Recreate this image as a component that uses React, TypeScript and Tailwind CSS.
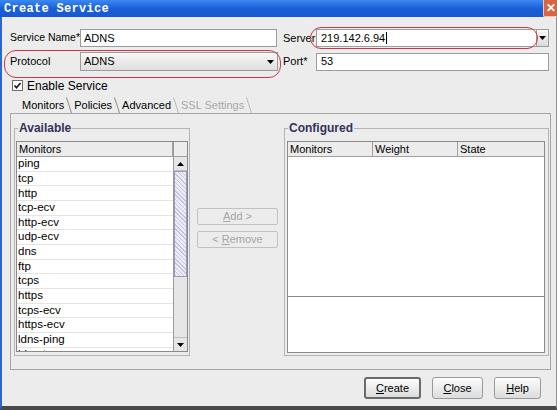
import React from 'react';

const available = [
  'ping', 'tcp', 'http', 'tcp-ecv', 'http-ecv', 'udp-ecv', 'dns', 'ftp',
  'tcps', 'https', 'tcps-ecv', 'https-ecv', 'ldns-ping', 'ldns-tcp',
];

function Arrow({ up = false }: { up?: boolean }) {
  return (
    <svg width="7" height="4" viewBox="0 0 7 4">
      <polygon points={up ? '0,4 7,4 3.5,0' : '0,0 7,0 3.5,4'} fill="#000" />
    </svg>
  );
}

function TabSlash({ light = false }: { light?: boolean }) {
  return (
    <svg width="6" height="16" viewBox="0 0 6 16" className="shrink-0">
      <line x1="0.5" y1="0.5" x2="5.5" y2="16" stroke={light ? '#b8b8b8' : '#8c8c8c'} strokeWidth="1" />
    </svg>
  );
}

function Legend({ text }: { text: string }) {
  return (
    <span className="absolute -top-[9px] left-[3px] bg-[#ececec] px-[1px] text-[12px] font-bold leading-[16px] text-[#33335a]">
      {text}
    </span>
  );
}

function DlgButton({ mn, rest, focused = false }: { mn: string; rest: string; focused?: boolean }) {
  return (
    <button
      className={
        'flex h-[22px] w-full items-center justify-center rounded-[3px] bg-gradient-to-b from-[#fdfdfd] to-[#dcdcdc] text-[11px] text-black ' +
        (focused ? 'border-2 border-[#6a6a6a]' : 'border border-[#9a9a9a]')
      }
    >
      <span className="underline">{mn}</span>
      {rest}
    </button>
  );
}

export default function App() {
  return (
    <div className="flex h-[410px] w-[557px] flex-col overflow-hidden bg-[#ececec] font-['Liberation_Sans',Arial,sans-serif] text-[11px] text-black">
      {/* title bar */}
      <div className="relative flex h-[17px] shrink-0 items-center bg-gradient-to-b from-[#3d88f0] via-[#1a5fd8] to-[#1858cf] pl-[4px]">
        <span className="font-['Liberation_Mono',monospace] text-[12px] font-bold tracking-[0.3px] text-white">
          Create Service
        </span>
        <span className="absolute right-0 top-0 flex h-[17px] w-[14px] items-center justify-center rounded-bl-[2px] border-l border-b border-[#f3c7b8] bg-[#d9653f] text-[12px] font-bold leading-none text-white">
          ✕
        </span>
      </div>

      {/* body */}
      <div className="relative flex-1 border-l-2 border-r border-b-[4px] border-l-[#2b66d6] border-r-[#8e8e8e] border-b-[#4a4a4a] pl-[8px] pt-[12px]">
        {/* row 1 */}
        <div className="flex h-[18px] items-center">
          <span className="w-[70px] whitespace-nowrap text-[10.5px]">Service Name*</span>
          <div className="flex h-[18px] w-[197px] items-center border border-[#9c9c9c] bg-white px-[3px]">ADNS</div>
          <span className="ml-[6px] w-[33px]">Server</span>
          <div className="flex h-[18px] w-[221px] items-center border border-[#9c9c9c] bg-white px-[4px]">
            219.142.6.94<span className="ml-[1px] h-[12px] w-px bg-black" />
          </div>
          <div className="flex h-[18px] w-[12px] items-center justify-center border border-l-0 border-[#9c9c9c] bg-gradient-to-b from-[#fafafa] to-[#dadada]">
            <Arrow />
          </div>
        </div>

        {/* row 2 */}
        <div className="mt-[5px] flex h-[19px] items-center">
          <span className="w-[70px]">Protocol</span>
          <div className="flex h-[19px] w-[198px] items-center justify-between border border-[#9c9c9c] bg-gradient-to-b from-[#f8f8f8] to-[#dedede] pl-[3px] pr-[3px]">
            <span>ADNS</span>
            <Arrow />
          </div>
          <span className="ml-[5px] w-[33px]">Port*</span>
          <div className="flex h-[18px] w-[233px] items-center border border-[#9c9c9c] bg-white px-[4px]">53</div>
        </div>

        {/* checkbox */}
        <div className="mt-[8px] flex h-[13px] items-center gap-[4px] pl-[2px]">
          <span className="flex h-[11px] w-[11px] items-center justify-center border border-[#6f6f6f] bg-white">
            <svg width="9" height="9" viewBox="0 0 9 9">
              <polyline points="1.5,4.5 3.5,6.8 7.5,2" fill="none" stroke="#1c1c1c" strokeWidth="1.7" />
            </svg>
          </span>
          <span className="text-[12px]">Enable Service</span>
        </div>

        {/* tabs */}
        <div className="mt-[5px] flex h-[16px] items-end pl-[10px] text-[11px]">
          <span className="px-[2px]">Monitors</span>
          <TabSlash />
          <span className="px-[2px]">Policies</span>
          <TabSlash />
          <span className="px-[2px]">Advanced</span>
          <TabSlash light />
          <span className="px-[2px] text-[#a8a8a8]">SSL Settings</span>
          <TabSlash light />
        </div>

        {/* tab panel */}
        <div className="flex h-[257px] w-[541px] border border-[#a6a6a6] pl-[3px] pt-[14px]">
          {/* available */}
          <div className="relative h-[228px] w-[176px] shrink-0 border border-[#b4b4b4] pl-[1px] pt-[12px]">
            <Legend text="Available" />
            <div className="flex h-[211px] w-[172px] border border-[#8a8a8a] bg-white">
              <div className="flex flex-1 flex-col overflow-hidden">
                <div className="flex h-[15px] shrink-0 items-center border-b border-r border-[#a0a0a0] bg-[#ececec] px-[2px]">Monitors</div>
                {available.map(m => (
                  <div key={m} className="flex h-[14.67px] shrink-0 items-center border-b border-[#e4e4e4] px-[1px] text-[11.5px]">
                    {m}
                  </div>
                ))}
              </div>
              <div className="flex w-[14px] shrink-0 flex-col border-l border-[#9a9a9a] bg-[#e6e6e6]">
                <div className="h-[15px] border-b border-[#a0a0a0] bg-[#ececec]" />
                <div className="flex h-[14px] items-center justify-center border-b border-[#c0c0c0]">
                  <Arrow up />
                </div>
                <div className="h-[106px] border border-[#9a9ac0] bg-[repeating-linear-gradient(45deg,#c4c4e0_0px,#c4c4e0_1px,#ececf6_1px,#ececf6_3px)]" />
                <div className="flex-1" />
                <div className="flex h-[14px] items-center justify-center border-t border-[#c0c0c0]">
                  <Arrow />
                </div>
              </div>
            </div>
          </div>

          {/* move buttons */}
          <div className="flex w-[94px] shrink-0 flex-col gap-[6px] pl-[7px] pt-[80px]">
            <div className="flex h-[17px] w-[81px] items-center justify-center rounded-[2px] border border-[#c2c2c2] text-[#a6a6a6]">
              <span className="underline">A</span>dd &gt;
            </div>
            <div className="flex h-[17px] w-[81px] items-center justify-center rounded-[2px] border border-[#c2c2c2] text-[#a6a6a6]">
              &lt;&nbsp;<span className="underline">R</span>emove
            </div>
          </div>

          {/* configured */}
          <div className="relative h-[228px] w-[265px] shrink-0 border border-[#b4b4b4] pl-[2px] pt-[12px]">
            <Legend text="Configured" />
            <div className="flex h-[212px] w-[258px] flex-col border border-[#8a8a8a] bg-white">
              <div className="flex h-[15px] shrink-0 border-b border-[#a0a0a0] bg-[#ececec]">
                <span className="flex w-[85px] items-center border-r border-[#a0a0a0] px-[2px]">Monitors</span>
                <span className="flex w-[85px] items-center border-r border-[#a0a0a0] px-[2px]">Weight</span>
                <span className="flex flex-1 items-center px-[2px]">State</span>
              </div>
              <div className="h-[140px] shrink-0 border-b border-[#8a8a8a]" />
              <div className="flex-1" />
            </div>
          </div>
        </div>

        {/* dialog buttons */}
        <div className="mt-[7px] flex gap-[11px] pl-[354px]">
          <div className="w-[57px]"><DlgButton mn="C" rest="reate" focused /></div>
          <div className="w-[51px]"><DlgButton mn="C" rest="lose" /></div>
          <div className="w-[47px]"><DlgButton mn="H" rest="elp" /></div>
        </div>

        {/* annotation ovals */}
        <div className="pointer-events-none absolute left-[308px] top-[10px] h-[22px] w-[228px] rounded-[11px] border-[1.5px] border-[#c8394b]" />
        <div className="pointer-events-none absolute left-[2px] top-[33px] h-[28px] w-[277px] rounded-[12px] border-[1.5px] border-[#c8394b]" />
      </div>
    </div>
  );
}
